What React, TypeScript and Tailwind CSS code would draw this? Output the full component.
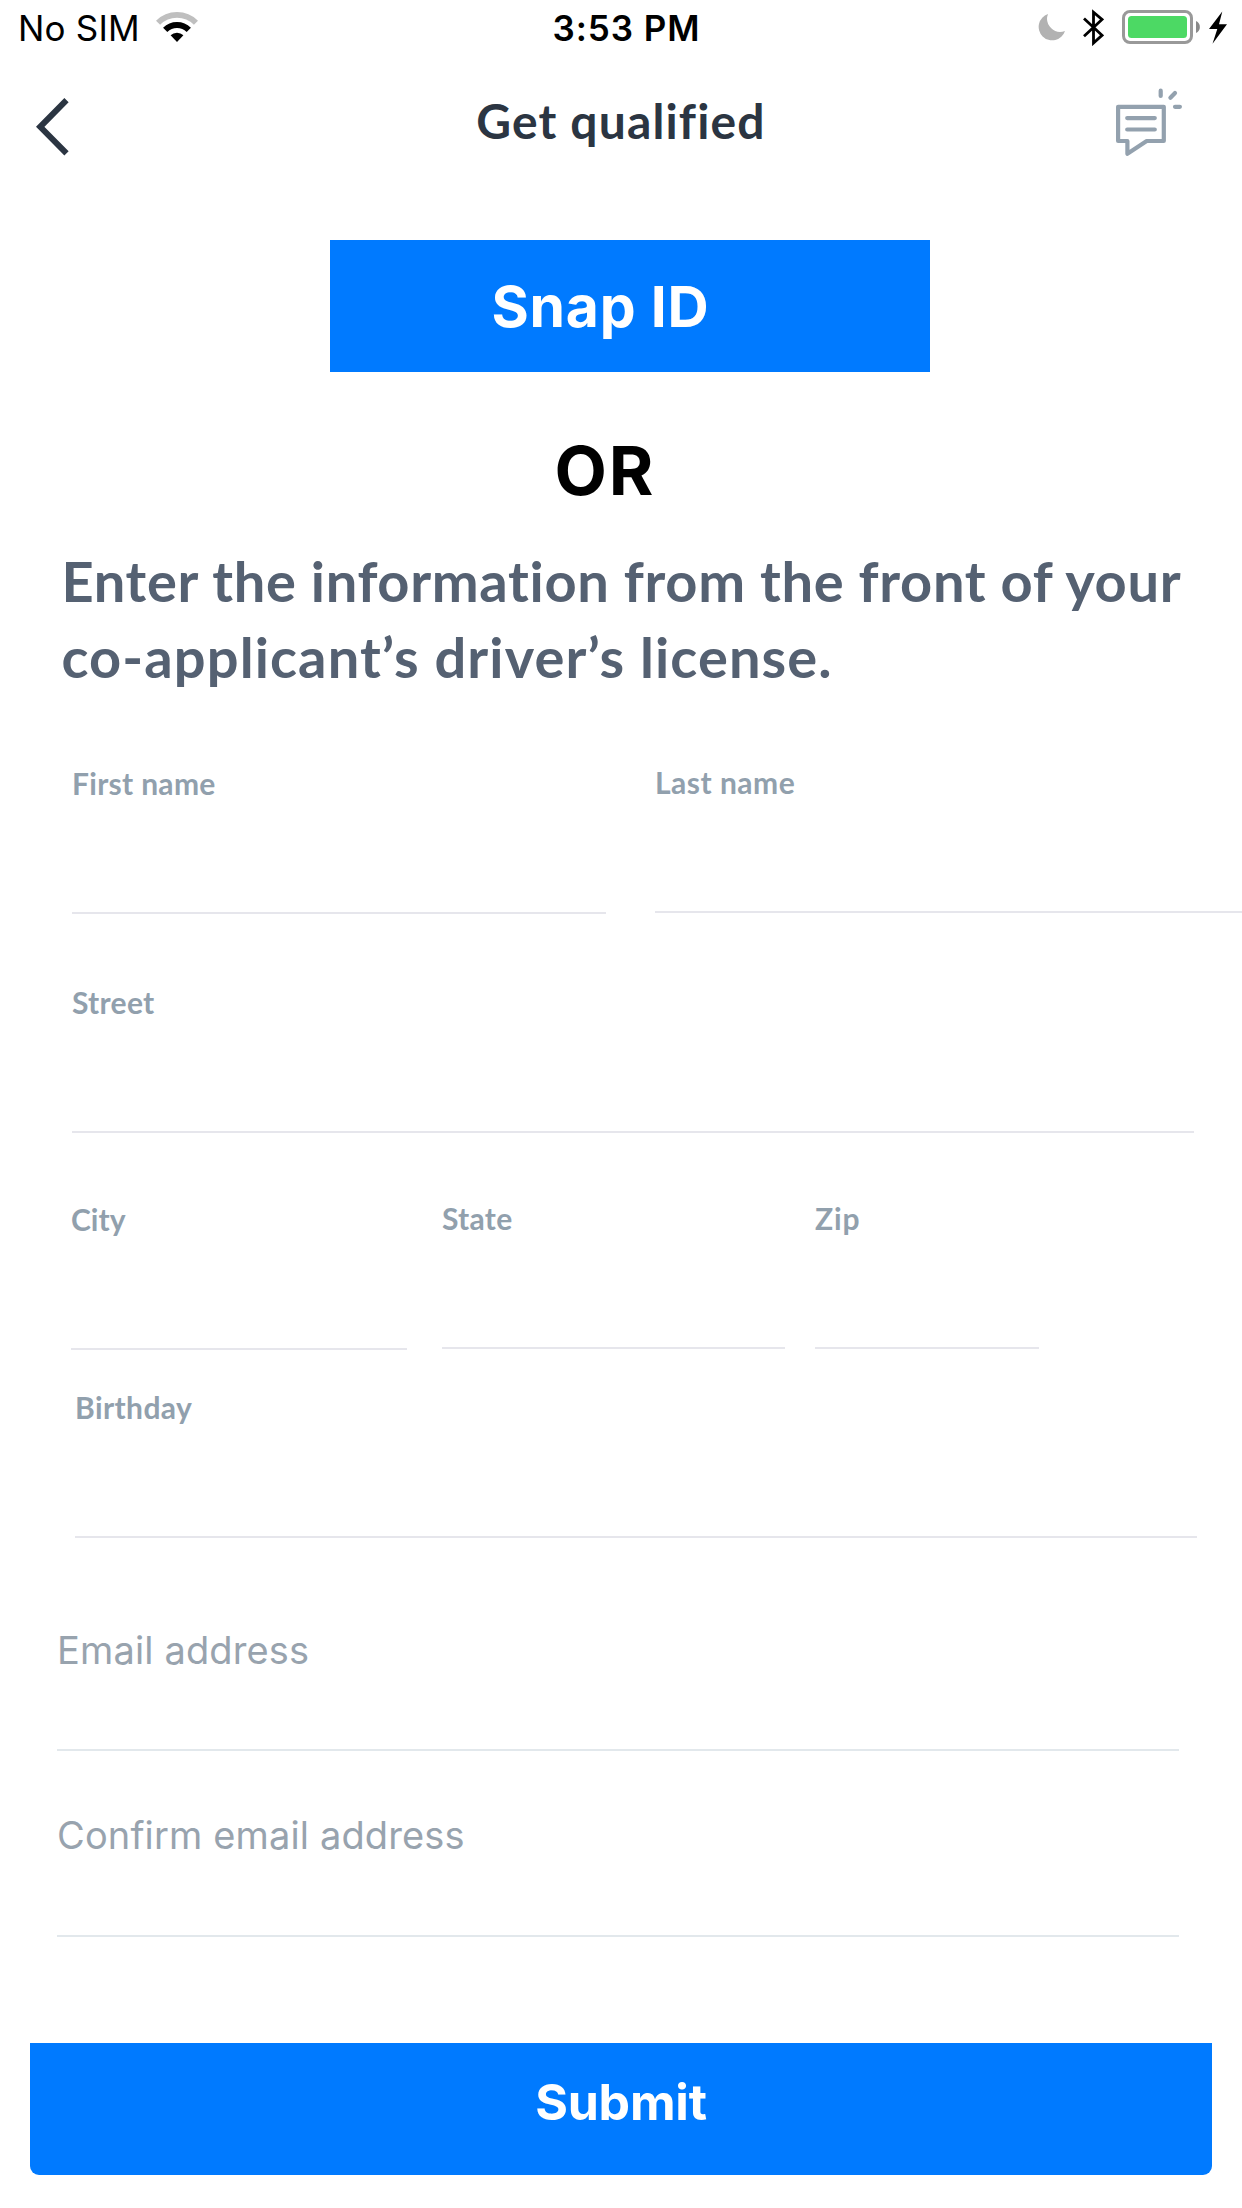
import React from 'react';

function WifiIcon() {
  return (
    <svg width="42" height="30" viewBox="0 0 42 30" fill="none" aria-label="Wi-Fi" className="mb-[2px]">
      <path d="M2.05 10.75A26.8 26.8 0 0 1 39.95 10.75" stroke="#bfbfbf" strokeWidth="5.8" />
      <path d="M9.2 17.9A16.7 16.7 0 0 1 32.8 17.9" stroke="#000" strokeWidth="6" />
      <path d="M21 29.9L14.6 23.3A9.1 9.1 0 0 1 27.4 23.3Z" fill="#000" />
    </svg>
  );
}

function MoonIcon() {
  return (
    <svg width="28" height="28" viewBox="0 0 28 28" aria-label="Do not disturb">
      <path d="M10 1A13.5 13.5 0 1 0 27 18A13.2 13.2 0 0 1 10 1Z" fill="#b2b2b2" />
    </svg>
  );
}

function BluetoothIcon() {
  return (
    <svg width="21" height="37" viewBox="0 0 21 37" fill="none" aria-label="Bluetooth">
      <path d="M1 9.5L19 26.3L10.5 34V3.2L19 10.5L1 27.3" stroke="#000" strokeWidth="2.8" />
    </svg>
  );
}

function BatteryIcon() {
  return (
    <svg width="79" height="34" viewBox="0 0 79 34" aria-label="Battery">
      <rect x="1.5" y="1.5" width="68" height="31" rx="6.5" fill="none" stroke="#999" strokeWidth="3" />
      <rect x="6" y="6" width="59" height="22" rx="3.5" fill="#4cd964" />
      <path d="M74 11A6.6 6.6 0 0 1 74 23Z" fill="#8a8a8a" />
    </svg>
  );
}

function BoltIcon() {
  return (
    <svg width="20" height="34" viewBox="0 0 20 34" aria-label="Charging">
      <path d="M14.3 1.5L1 19H9.3L4.5 33.7L19 14.3H11Z" fill="#000" />
    </svg>
  );
}

function ChatIcon() {
  return (
    <svg
      width="66"
      height="68"
      viewBox="0 0 66 68"
      fill="none"
      stroke="#93a1ae"
      strokeWidth="4.2"
      strokeLinecap="round"
      strokeLinejoin="round"
    >
      <path d="M2.1 18.8H47.8V53H30.7L11.4 65.8V53H2.1Z" />
      <path d="M11.2 30.1H38.8M11.2 41.5H38.8" />
      <path d="M44.7 2.7V7.9M54.4 9.7L59 5M59 18.8H63.9" />
    </svg>
  );
}

function Field({ label, className }: { label: string; className: string }) {
  return (
    <label className={`block h-[150px] border-b-2 border-[#e6e6ec] pt-px text-[30px] leading-9 font-bold text-[#91a0ad] ${className}`}>
      {label}
      <input className="block h-[110px] w-full outline-none" />
    </label>
  );
}

function PlainField({ label, className }: { label: string; className: string }) {
  return (
    <div
      className={`mr-[63px] ml-[57px] border-b-2 border-[#e2e8ec] font-['Inter',sans-serif] text-[38px] leading-[48px] tracking-[0.14px] text-[#98a3ae] ${className}`}
    >
      {label}
    </div>
  );
}

export default function App() {
  return (
    <main className="flex h-[2208px] w-[1242px] flex-col overflow-hidden bg-white font-['Lato',sans-serif] [font-variant-ligatures:none]">
      <header className="grid h-14 shrink-0 grid-cols-[1fr_auto_1fr] items-center pr-[14px] pl-[18px] font-['Inter',sans-serif] text-[35px] leading-10 text-black">
        <div className="flex items-center gap-4">
          <span className="tracking-[0.2px]">No SIM</span>
          <WifiIcon />
        </div>
        <span className="pl-[7px] font-semibold tracking-[0.95px]">3:53 PM</span>
        <div className="mb-[2px] flex items-center justify-end">
          <MoonIcon />
          <span className="ml-[17px]"><BluetoothIcon /></span>
          <span className="ml-[18px]"><BatteryIcon /></span>
          <span className="ml-[7px]"><BoltIcon /></span>
        </div>
      </header>

      <nav className="grid h-[126px] shrink-0 grid-cols-[1fr_auto_1fr] items-center px-9">
        <button aria-label="Back" className="mt-[15px] justify-self-start">
          <svg width="34" height="58" viewBox="0 0 34 58" fill="none">
            <path d="M30.5 2.2L4.2 28.8L30.5 55.4" stroke="#2b3542" strokeWidth="6" />
          </svg>
        </button>
        <h1 className="pt-[3px] text-[48px] leading-[58px] font-bold tracking-[1.15px] text-[#2b3542]">Get qualified</h1>
        <button aria-label="Messages" className="mt-[6px] mr-6 justify-self-end">
          <ChatIcon />
        </button>
      </nav>

      <button className="mt-[58px] ml-[330px] h-[132px] w-[600px] shrink-0 bg-[#007aff] pr-[59px] font-['Inter',sans-serif] text-[57px] leading-none font-bold tracking-[0.8px] text-white">
        Snap ID
      </button>

      <p className="mt-[58px] pr-[32px] text-center font-['Inter',sans-serif] text-[68px] leading-[80px] font-bold tracking-[2px] text-black">
        OR
      </p>

      <h2 className="mt-[33px] pl-[61.5px] text-[56px] leading-[76px] font-bold whitespace-nowrap text-[#556172]">
        <span className="block tracking-[0.67px]">Enter the information from the front of your</span>
        <span className="block tracking-[1.1px]">co-applicant’s driver’s license.</span>
      </h2>

      <div className="mt-[68px] flex h-[151px] shrink-0 pl-[72px]">
        <Field label="First name" className="mt-px w-[534px] tracking-[0.3px]" />
        <Field label="Last name" className="ml-[49px] flex-1 tracking-[0.5px]" />
      </div>
      <Field label="Street" className="mt-[69px] mr-[48px] ml-[72px] shrink-0 tracking-[0.3px]" />
      <div className="mt-[66px] flex h-[151px] shrink-0 pl-[71px]">
        <Field label="City" className="mt-px w-[336px]" />
        <Field label="State" className="ml-[35px] w-[343px] tracking-[0.3px]" />
        <Field label="Zip" className="ml-[30px] w-[224px] tracking-[0.9px]" />
      </div>
      <Field label="Birthday" className="mt-[38px] mr-[45px] ml-[75px] shrink-0 tracking-[0.4px]" />
      <PlainField label="Email address" className="mt-[88px] h-[125px]" />
      <PlainField label="Confirm email address" className="mt-[60px] h-[126px]" />

      <button className="mx-[30px] mt-[106px] h-[132px] shrink-0 rounded-b-[9px] bg-[#007aff] pb-[15px] font-['Inter',sans-serif] text-[50px] leading-none font-bold tracking-[-0.2px] text-white">
        Submit
      </button>
    </main>
  );
}
